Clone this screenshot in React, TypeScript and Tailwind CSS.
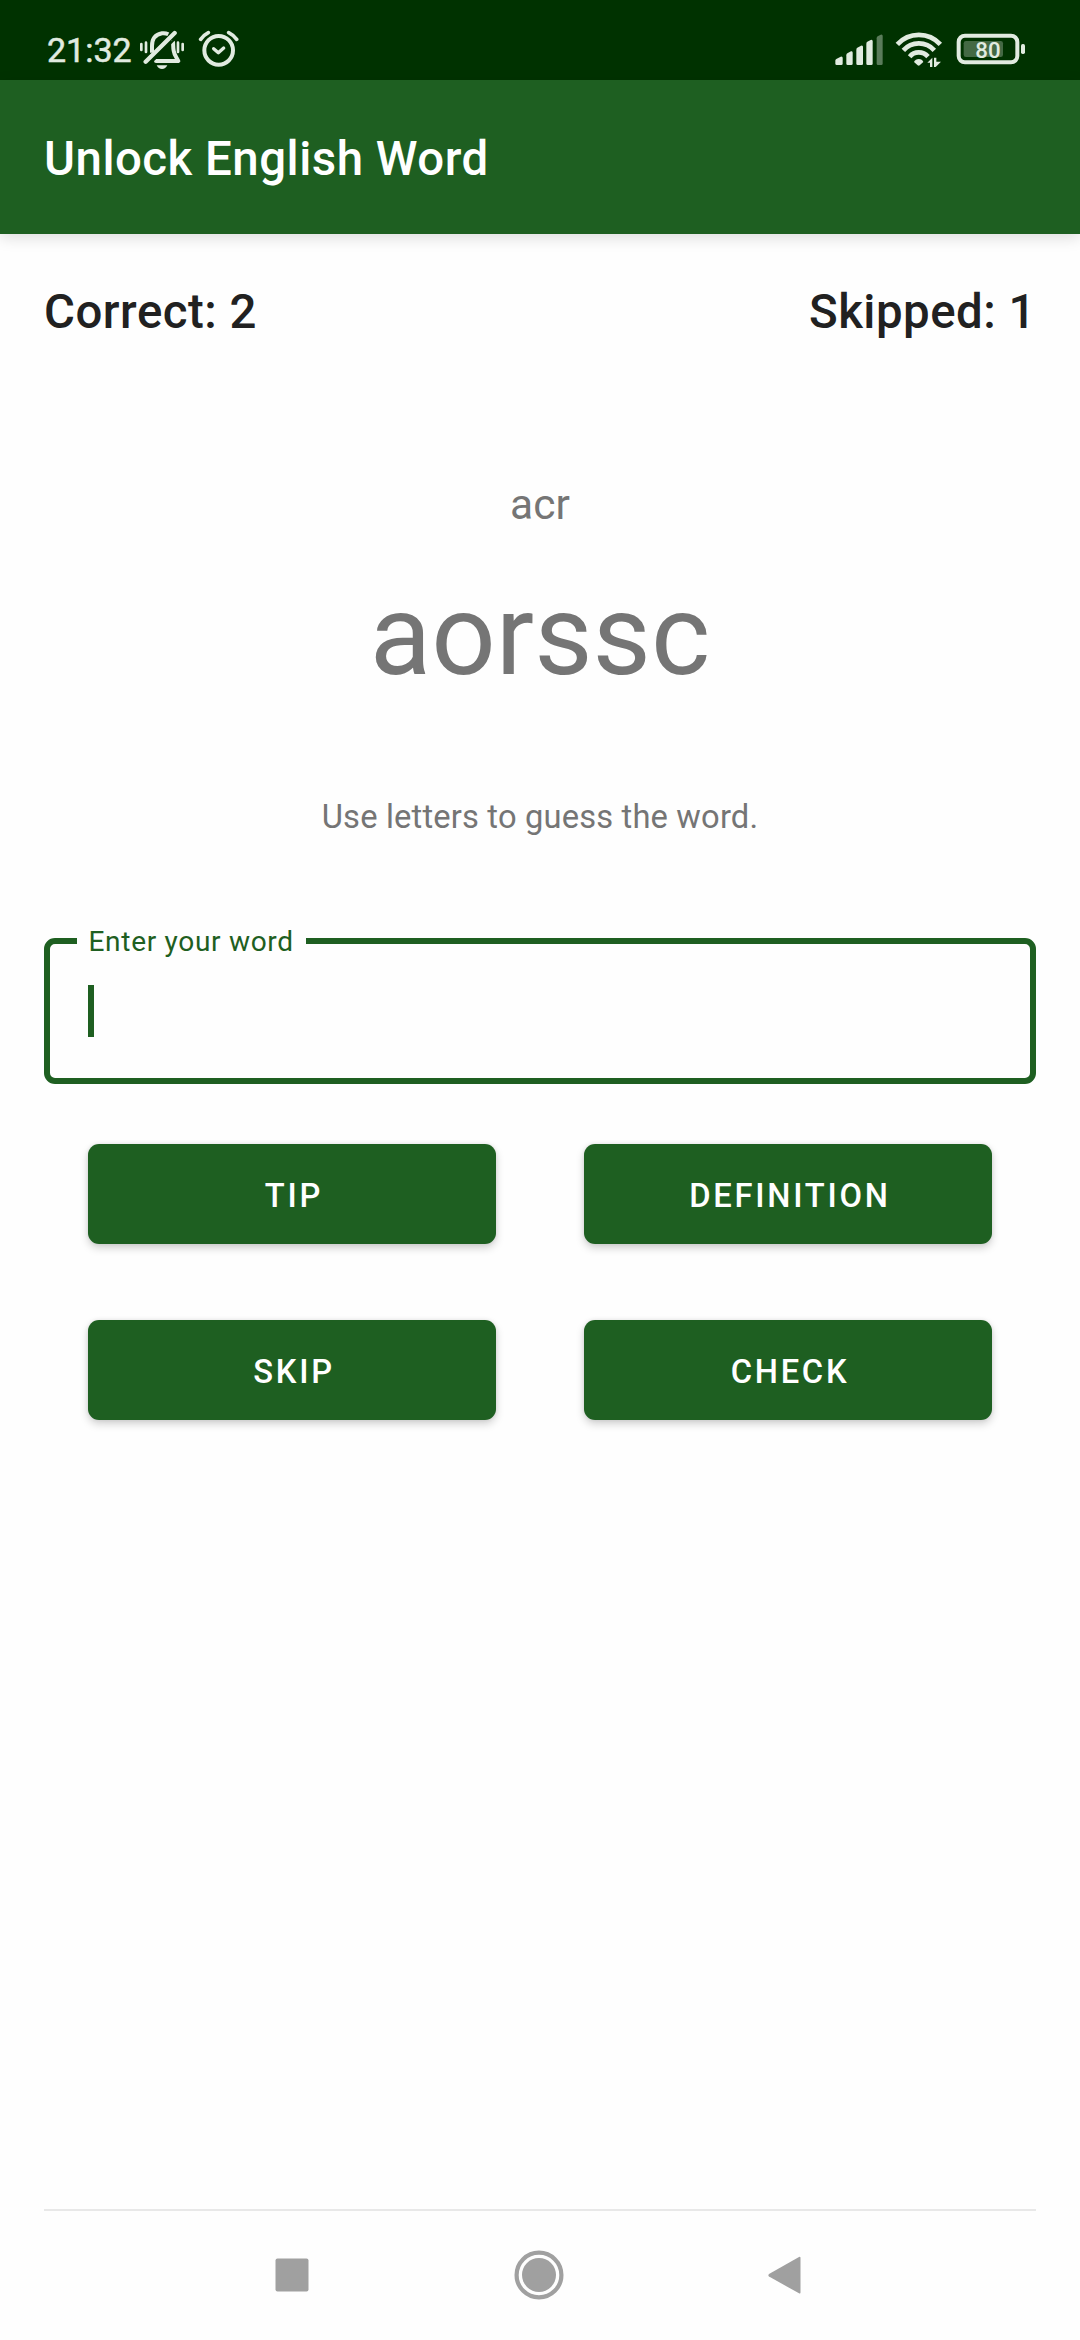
import React from "react";

const ICON = "#e1ebe0";

function BellOff() {
  return (
    <svg className="ml-[8px] h-[40px] w-[44px]" viewBox="330 60 132 120" fill="none" stroke={ICON}>
      <path d="M366 128V108C366 86 378 73 396 70C402 69 409 70 415 73" strokeWidth="12" />
      <path d="M429 96C430 104 429 113 431 122C433 136 440 142 445 153H378" strokeWidth="12" strokeLinecap="round" strokeLinejoin="round" />
      <path d="M355 166L440 82" strokeWidth="6" stroke="#003200" />
      <path d="M347 155L434 69" strokeWidth="13" strokeLinecap="round" />
      <path d="M380 166H412C409 173 403 177 396 177S383 173 380 166Z" fill={ICON} stroke="none" />
      <path d="M334 102V120M348 98V126M444 98V126M458 102V120" strokeWidth="8" strokeLinecap="round" />
    </svg>
  );
}

function Alarm() {
  return (
    <svg className="ml-[14px] h-[38px] w-[41px]" viewBox="504 60 123 114" fill="none" stroke={ICON} strokeLinecap="round">
      <circle cx="566" cy="121" r="43" strokeWidth="12" />
      <path d="M512 88C518 80 525 73 535 68M620 88C614 80 606 73 596 68" strokeWidth="11" />
      <path d="M551 116L565 128L581 114" strokeWidth="10" strokeLinejoin="round" />
    </svg>
  );
}

function Signal() {
  return (
    <svg className="h-[40px] w-[49px]" viewBox="45 60 147 120" fill={ICON}>
      <path d="M46 152Q46 149 49 147L62 140Q68 138 68 144V161Q68 165 64 165H50Q46 165 46 161Z" />
      <path d="M79 136Q79 132 82 130L93 124Q98 122 98 128V161Q98 165 94 165H83Q79 165 79 161Z" />
      <path d="M109 119Q109 115 112 113L123 107Q129 105 129 111V161Q129 165 125 165H113Q109 165 109 161Z" />
      <path d="M139 101Q139 97 142 95L152 90Q158 88 158 94V161Q158 165 154 165H143Q139 165 139 161Z" />
      <path d="M170 85Q170 81 173 79L182 74Q188 72 188 78V161Q188 165 184 165H174Q170 165 170 161Z" opacity=".4" />
    </svg>
  );
}

function Wifi() {
  return (
    <svg className="ml-[11px] h-[40px] w-[48px]" viewBox="225 60 144 120" fill="none" stroke={ICON}>
      <path d="M232 103C267 65 326 65 361 103" strokeWidth="14" />
      <path d="M250 121C275 93 318 93 343 121" strokeWidth="14" />
      <path d="M269 140C283 123 309 123 324 140" strokeWidth="14" />
      <path d="M282 156C286 144 307 144 310 156L299 166Q296 168 293 166Z" fill={ICON} stroke="none" />
      <path d="M322 158L337 143V171H330V158Z" fill={ICON} stroke="none" />
      <path d="M342 143H349V155H363L347 171H342Z" fill={ICON} stroke="none" />
    </svg>
  );
}

function Battery() {
  return (
    <svg className="ml-[13px] h-[40px] w-[70px]" viewBox="408 60 210 120">
      <rect x="416" y="77" width="176" height="80" rx="19" fill="none" stroke={ICON} strokeWidth="12" />
      <rect x="431" y="93" width="118" height="48" rx="7" fill={ICON} opacity=".3" />
      <rect x="603" y="102" width="12" height="30" rx="5" fill={ICON} />
      <text x="504" y="143" fontSize="66" fontWeight="500" fill={ICON} textAnchor="middle" textLength="76" lengthAdjust="spacingAndGlyphs" fontFamily="Roboto">
        80
      </text>
    </svg>
  );
}

function ActionButton({ label }: { label: string }) {
  return (
    <button className="flex h-[100px] items-center justify-center rounded-[11px] bg-[#1e5f21] pt-[4px] pl-[4px] text-[32.7px] leading-[40px] font-medium tracking-[2.75px] text-white shadow-[0_4px_8px_rgba(0,0,0,0.18),0_0_4px_rgba(0,0,0,0.08)]">
      {label}
    </button>
  );
}

export default function App() {
  return (
    <div className="flex h-[2340px] w-[1080px] flex-col bg-[#fefefe] font-['Roboto',sans-serif]">
      <div className="flex h-[80px] items-start bg-[#003200] pt-[30px] pr-[54px] pl-[47px]">
        <span className="w-[85px] text-[34px] leading-[40px] font-normal whitespace-nowrap text-[#e1ebe0] [-webkit-text-stroke:0.5px_#e1ebe0]">21:32</span>
        <BellOff />
        <Alarm />
        <div className="ml-auto flex">
          <Signal />
          <Wifi />
          <Battery />
        </div>
      </div>

      <header className="flex h-[154px] items-center bg-[#1e5f21] px-[44px] pt-[4px] shadow-[0_4px_14px_rgba(0,0,0,0.13)]">
        <h1 className="text-[47.4px] leading-[60px] font-medium tracking-[0.5px] text-white">Unlock English Word</h1>
      </header>

      <main className="flex flex-1 flex-col px-[44px]">
        <div className="mt-[48px] flex justify-between text-[47.4px] leading-[60px] font-medium tracking-[0.5px] text-[#212121]">
          <span>Correct: 2</span>
          <span>Skipped: 1</span>
        </div>

        <div className="flex flex-col items-center text-[#757575]">
          <p className="mt-[133px] text-[42.5px] leading-[59px]">acr</p>
          <p className="mt-[31px] text-[113.2px] leading-[141px]">aorssc</p>
          <p className="mt-[91px] text-[32.7px] leading-[40px] tracking-[0.17px]">Use letters to guess the word.</p>
        </div>

        <div className="relative mt-[101px] flex h-[146px] items-center rounded-[11px] border-[6px] border-[#1e5f21] pl-[38px]">
          <label className="absolute -top-[22px] left-[27px] w-[229px] bg-[#fefefe] pl-[11.5px] text-[28.05px] leading-[39px] tracking-[0.68px] whitespace-nowrap text-[#1e5f21]">
            Enter your word
          </label>
          <span className="h-[52px] w-[6px] bg-[#1e5f21]" />
        </div>

        <div className="mt-[60px] grid grid-cols-2 gap-x-[88px] gap-y-[76px] px-[44px]">
          <ActionButton label="TIP" />
          <ActionButton label="DEFINITION" />
          <ActionButton label="SKIP" />
          <ActionButton label="CHECK" />
        </div>

        <div className="mt-auto h-[2px] bg-[#e8e8e8]" />
      </main>

      <nav className="flex h-[129px] items-center justify-between pr-[279px] pb-px pl-[275px]">
        <svg className="h-[50px] w-[34px]" viewBox="0 0 34 50">
          <rect x=".5" y="8.5" width="33" height="33" rx="2" fill="#a0a0a0" />
        </svg>
        <svg className="h-[50px] w-[50px]" viewBox="0 0 50 50">
          <circle cx="25" cy="25" r="22.4" fill="none" stroke="#a0a0a0" strokeWidth="4.2" />
          <circle cx="25" cy="25" r="17" fill="#a0a0a0" />
        </svg>
        <svg className="h-[50px] w-[33px]" viewBox="0 0 33 50">
          <path d="M1 24Q-.3 25.3 1 26.6L31 43.3Q32.5 44 32.5 42.3V8Q32.5 6.3 31 7Z" fill="#a0a0a0" />
        </svg>
      </nav>
    </div>
  );
}
